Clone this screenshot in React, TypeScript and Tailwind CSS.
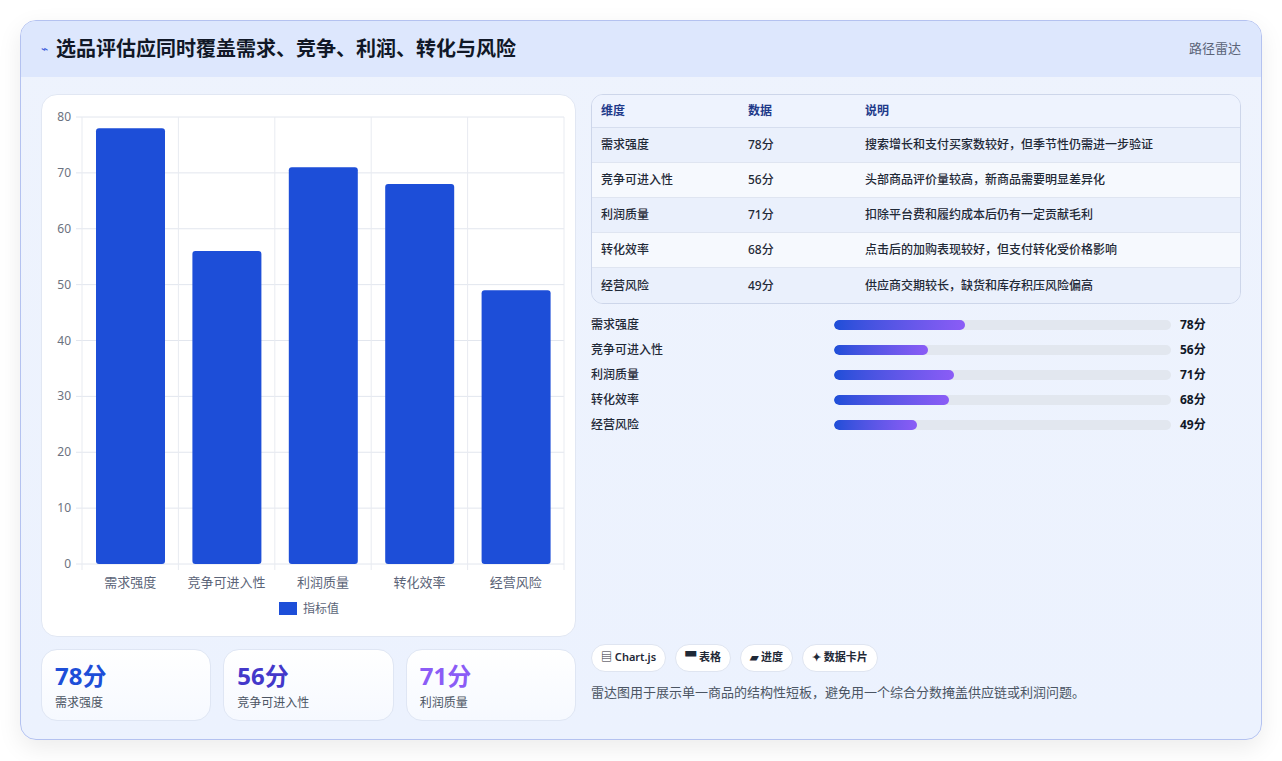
import React from 'react';

const items = [
  { name: '需求强度', value: 78, note: '搜索增长和支付买家数较好，但季节性仍需进一步验证' },
  { name: '竞争可进入性', value: 56, note: '头部商品评价量较高，新商品需要明显差异化' },
  { name: '利润质量', value: 71, note: '扣除平台费和履约成本后仍有一定贡献毛利' },
  { name: '转化效率', value: 68, note: '点击后的加购表现较好，但支付转化受价格影响' },
  { name: '经营风险', value: 49, note: '供应商交期较长，缺货和库存积压风险偏高' },
];

const font = { fontFamily: '"Noto Sans", "Noto Sans CJK SC", sans-serif' };

function BarChart() {
  const left = 40, right = 522, top = 22, bottom = 469;
  const cw = (right - left) / 5;
  const y = (v: number) => bottom - (v / 80) * (bottom - top);
  return (
    <svg width="535" height="543" viewBox="0 0 535 543" style={font}>
      {[0, 10, 20, 30, 40, 50, 60, 70, 80].map((t) => (
        <g key={t}>
          <line x1={left - 6} x2={right} y1={y(t)} y2={y(t)} stroke="#e2e6ee" />
          <text x={29} y={y(t) + 4} fontSize="12" fill="#6b7280" textAnchor="end">{t}</text>
        </g>
      ))}
      {[0, 1, 2, 3, 4, 5].map((i) => (
        <line key={i} x1={left + i * cw} x2={left + i * cw} y1={top} y2={bottom + 6} stroke="#e8ebf1" />
      ))}
      {items.map((it, i) => (
        <g key={it.name}>
          <rect x={left + i * cw + 14} y={y(it.value)} width={69} height={bottom - y(it.value)} rx={3} fill="#1d4ed8" />
          <text x={left + i * cw + cw / 2} y={492} fontSize="13" fill="#5b6478" textAnchor="middle">{it.name}</text>
        </g>
      ))}
      <rect x={237} y={507} width={18} height={13} fill="#1d4ed8" />
      <text x={261} y={518} fontSize="12" fill="#5b6478">指标值</text>
    </svg>
  );
}

export default function App() {
  return (
    <div className="w-[1282px] h-[761px] bg-white pt-5 pl-5" style={font}>
      <div className="w-[1242px] h-[720px] rounded-2xl border border-[#b4c2f0] bg-gradient-to-b from-[#eef3fd] to-[#ecf2fe] shadow-[0_8px_24px_rgba(0,0,0,0.08)] overflow-hidden flex flex-col">
        <div className="h-[56px] bg-[#dde7fd] flex items-center justify-between px-5 shrink-0">
          <div className="flex items-center gap-2">
            <span className="text-[#3b5bdb] text-[12px]">⌁</span>
            <h1 className="text-[20px] font-bold text-[#111827]">选品评估应同时覆盖需求、竞争、利润、转化与风险</h1>
          </div>
          <span className="text-[13px] text-[#5b6478]">路径雷达</span>
        </div>
        <div className="flex gap-[15px] px-5 pt-[17px]">
          <div className="w-[535px] flex flex-col gap-3">
            <div className="h-[543px] bg-white rounded-2xl border border-[#e1e7f3]">
              <BarChart />
            </div>
            <div className="grid grid-cols-3 gap-3">
              {items.slice(0, 3).map((it, i) => (
                <div key={it.name} className="h-[72px] rounded-2xl bg-gradient-to-b from-white to-[#f6f9ff] border border-[#dfe6f4] px-[13px] pt-[10px]">
                  <div className={`text-[24px] font-bold leading-[32px] ${['text-[#1d4ed8]', 'text-[#4338ca]', 'text-[#8b5cf6]'][i]}`}>{it.value}分</div>
                  <div className="text-[12px] text-[#4b5563] mt-[2px]">{it.name}</div>
                </div>
              ))}
            </div>
          </div>
          <div className="flex-1 flex flex-col">
            <div className="rounded-xl border border-[#cdd6ea] overflow-hidden text-[12px]">
              <div className="flex h-[33px] items-center bg-[#eef3fe] text-[#1e3a8a] font-semibold border-b border-[#d6deef]">
                <div className="w-[156px] pl-[9px]">维度</div>
                <div className="w-[117px]">数据</div>
                <div className="flex-1">说明</div>
              </div>
              {items.map((it, i) => (
                <div key={it.name} className={`flex h-[35px] items-center text-[#1f2937] font-medium ${i % 2 === 0 ? 'bg-[#eaf0fc]' : 'bg-[#f6f9fe]'} ${i < 4 ? 'border-b border-[#dfe5f1]' : ''}`}>
                  <div className="w-[156px] pl-[9px]">{it.name}</div>
                  <div className="w-[117px]">{it.value}分</div>
                  <div className="flex-1">{it.note}</div>
                </div>
              ))}
            </div>
            <div className="flex flex-col mt-[8px]">
              {items.map((it) => (
                <div key={it.name} className="flex items-center h-[25px] text-[12px]">
                  <div className="w-[243px] text-[#1f2937] font-medium">{it.name}</div>
                  <div className="w-[337px] h-[10px] rounded-full bg-[#e2e7ef] overflow-hidden">
                    <div className="h-full rounded-full bg-gradient-to-r from-[#1d4ed8] to-[#8b5cf6]" style={{ width: `${it.value / 2}%` }} />
                  </div>
                  <div className="ml-[9px] font-bold text-[#111827]">{it.value}分</div>
                </div>
              ))}
            </div>
            <div className="mt-auto mb-[19px]">
              <div className="flex gap-[9px]">
                {['▤ Chart.js', '▀ 表格', '▰ 进度', '✦ 数据卡片'].map((c) => (
                  <span key={c} className="h-[28px] px-[9px] rounded-full bg-white border border-[#dfe5f1] flex items-center text-[11px] font-semibold text-[#1f2937]">{c}</span>
                ))}
              </div>
              <p className="mt-[11px] text-[13px] text-[#4b5563]">雷达图用于展示单一商品的结构性短板，避免用一个综合分数掩盖供应链或利润问题。</p>
            </div>
          </div>
        </div>
      </div>
    </div>
  );
}
